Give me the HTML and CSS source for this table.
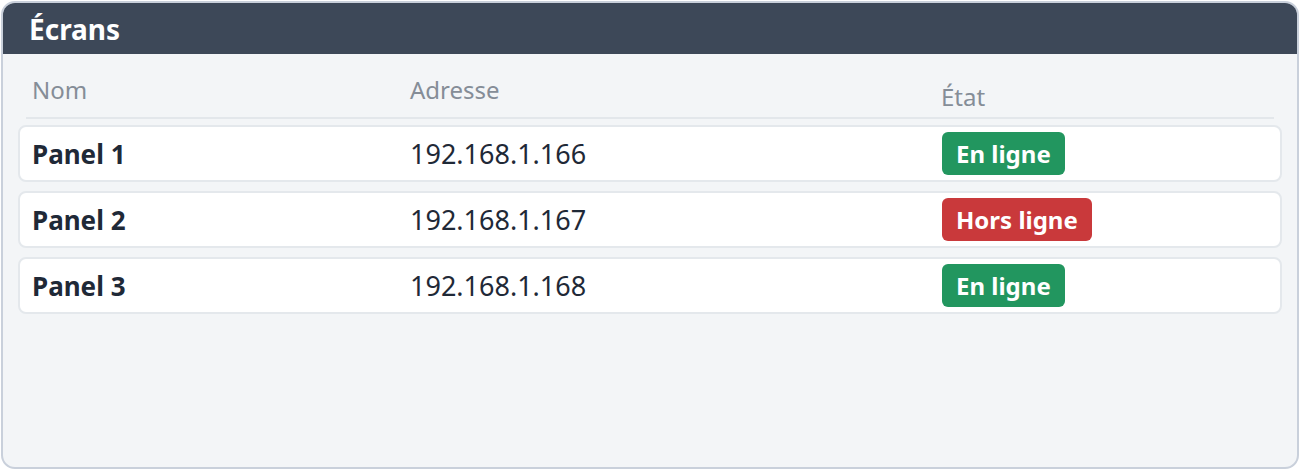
FILE: index.html
```html
<!DOCTYPE html>
<html lang="fr">
<head>
<meta charset="utf-8">
<title>Écrans</title>
<link rel="stylesheet" href="styles.css">
</head>
<body>
<section class="card">
  <header class="card-head"><h1 class="title">Écrans</h1></header>
  <div class="card-body">
    <div class="thead">
      <div class="th">Nom</div>
      <div class="th">Adresse</div>
      <div class="th th-state">État</div>
    </div>
    <div class="rows">
      <div class="row">
        <div class="name">Panel 1</div>
        <div class="addr">192.168.1.166</div>
        <div class="state"><span class="badge on">En ligne</span></div>
      </div>
      <div class="row">
        <div class="name">Panel 2</div>
        <div class="addr">192.168.1.167</div>
        <div class="state"><span class="badge off">Hors ligne</span></div>
      </div>
      <div class="row">
        <div class="name">Panel 3</div>
        <div class="addr">192.168.1.168</div>
        <div class="state"><span class="badge on">En ligne</span></div>
      </div>
    </div>
  </div>
</section>
</body>
</html>
```
FILE: styles.css
```css
html, body {
  margin: 0;
  padding: 0;
  background: #ffffff;
}
body {
  font-family: "Noto Sans", "Liberation Sans", sans-serif;
  color: #1f2937;
}
.card {
  margin: 1px;
  width: 1298px;
  height: 468px;
  box-sizing: border-box;
  border: 2px solid #c9d0db;
  border-radius: 14px;
  background: #f3f5f7;
  overflow: hidden;
}
.card-head {
  background: #3d4858;
  height: 51px;
  display: flex;
  align-items: center;
  padding-left: 26px;
}
.title {
  margin: 0;
  color: #ffffff;
  font-size: 28px;
  font-weight: 700;
  line-height: 1;
}
.card-body {
  padding: 0 15px;
}
.thead {
  margin: 0 8px;
  padding: 21px 6px 5px;
  border-bottom: 2px solid #e3e7eb;
  display: grid;
  grid-template-columns: 378px 531px 1fr;
  align-items: start;
}
.th {
  font-size: 24px;
  color: #858d97;
  line-height: 30px;
}
.th-state {
  padding-top: 7px;
}
.rows {
  margin-top: 6px;
  display: flex;
  flex-direction: column;
  gap: 9px;
}
.row {
  display: grid;
  grid-template-columns: 378px 531px 1fr;
  align-items: center;
  height: 57px;
  box-sizing: border-box;
  padding-left: 12px;
  background: #ffffff;
  border: 2px solid #e4e8ec;
  border-radius: 8px;
}
.name {
  font-size: 26px;
  font-weight: 700;
  color: #1f2937;
}
.addr {
  font-size: 27px;
  color: #1f2937;
}
.state {
  display: flex;
  padding-left: 1px;
}
.badge {
  display: inline-flex;
  align-items: center;
  height: 43px;
  padding: 0 14px;
  border-radius: 6px;
  color: #ffffff;
  font-size: 24px;
  font-weight: 700;
}
.badge.on {
  background: #22965f;
}
.badge.off {
  background: #c9393b;
}
```
